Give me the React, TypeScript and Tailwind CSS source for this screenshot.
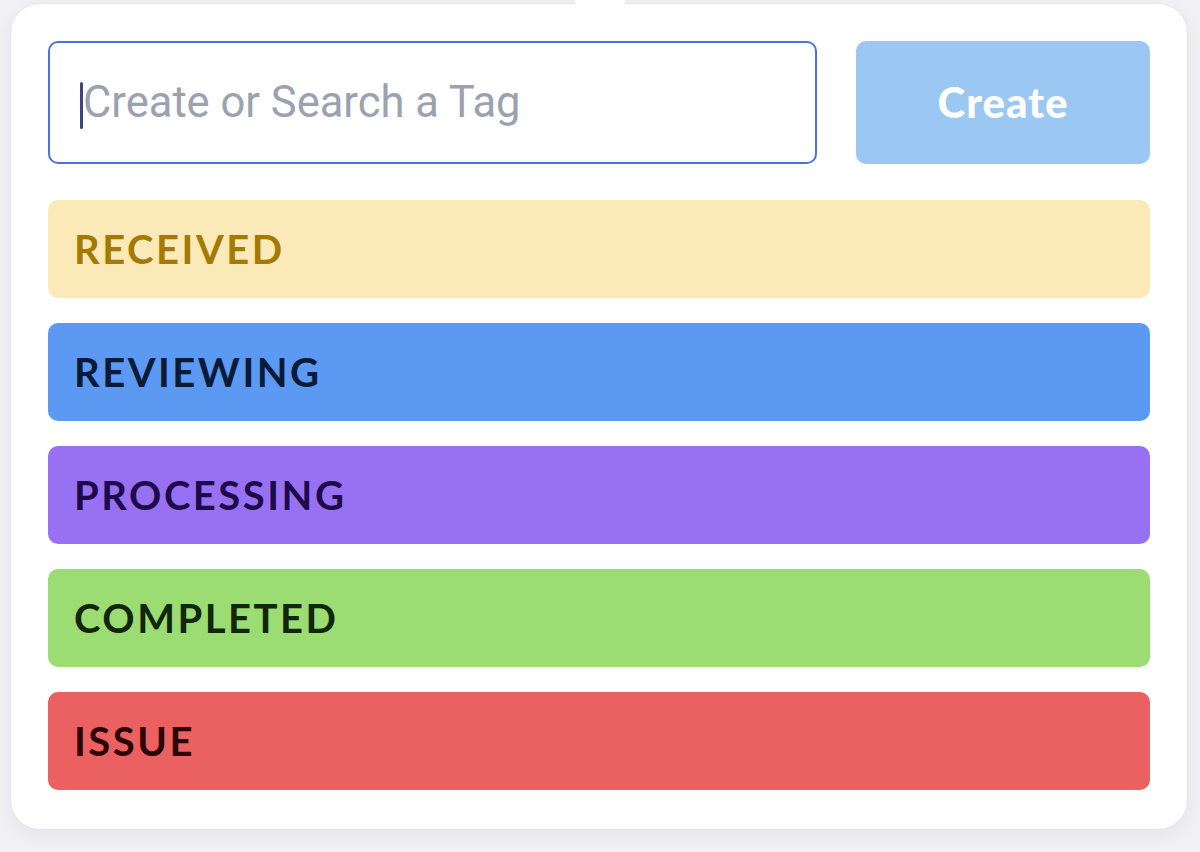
import React, { useState } from "react";

const tags = [
  { name: "RECEIVED", bg: "bg-[#fbeab7]", text: "text-[#a47a05]" },
  { name: "REVIEWING", bg: "bg-[#5b99f2]", text: "text-[#0b1a36]" },
  { name: "PROCESSING", bg: "bg-[#9871f3]", text: "text-[#1c0a4a]" },
  { name: "COMPLETED", bg: "bg-[#9cdd73]", text: "text-[#11260a]" },
  { name: "ISSUE", bg: "bg-[#eb6061]", text: "text-[#2b0406]" },
];

export default function App() {
  const [query, setQuery] = useState("");

  return (
    <div className="w-[1200px] h-[852px] bg-[#f1f1f4] pt-[3px] pl-[10px] overflow-hidden">
      <div className="relative w-[1178px] h-[827px] bg-white rounded-[30px] border border-[#e4e5f4] shadow-[0_6px_16px_rgba(40,40,80,0.06)] p-[37px]">
        {/* little notch the popover hangs from */}
        <div className="absolute -top-[4px] left-[564px] w-[50px] h-[6px] bg-white" />

        {/* Search + Create */}
        <div className="flex items-stretch gap-[39px] h-[123px]">
          <div className="relative flex-1 flex items-center border-[2px] border-[#4a72e1] rounded-[10px] pl-[33px] pr-4">
            {query === "" && (
              <span className="absolute left-[30px] top-[39px] w-[3px] h-[47px] bg-[#3b4584] rounded-sm" />
            )}
            <input
              type="text"
              value={query}
              onChange={(e) => setQuery(e.target.value)}
              placeholder="Create or Search a Tag"
              className="w-full bg-transparent outline-none text-[43.5px] text-gray-700 placeholder:text-[#9aa2b1] caret-[#343e80] font-['Roboto',sans-serif]"
            />
          </div>
          <button className="w-[294px] bg-[#9bc7f3] rounded-[10px] text-white text-[42px] font-black font-['Lato',sans-serif] tracking-[1px]">
            Create
          </button>
        </div>

        {/* Tag list */}
        <div className="mt-[36px] flex flex-col gap-[25px]">
          {tags.map((tag) => (
            <div
              key={tag.name}
              className={`h-[98px] rounded-[10px] flex items-center pl-[26px] ${tag.bg}`}
            >
              <span
                className={`text-[40px] font-bold tracking-[2.5px] font-['Lato',sans-serif] ${tag.text}`}
              >
                {tag.name}
              </span>
            </div>
          ))}
        </div>
      </div>
    </div>
  );
}
